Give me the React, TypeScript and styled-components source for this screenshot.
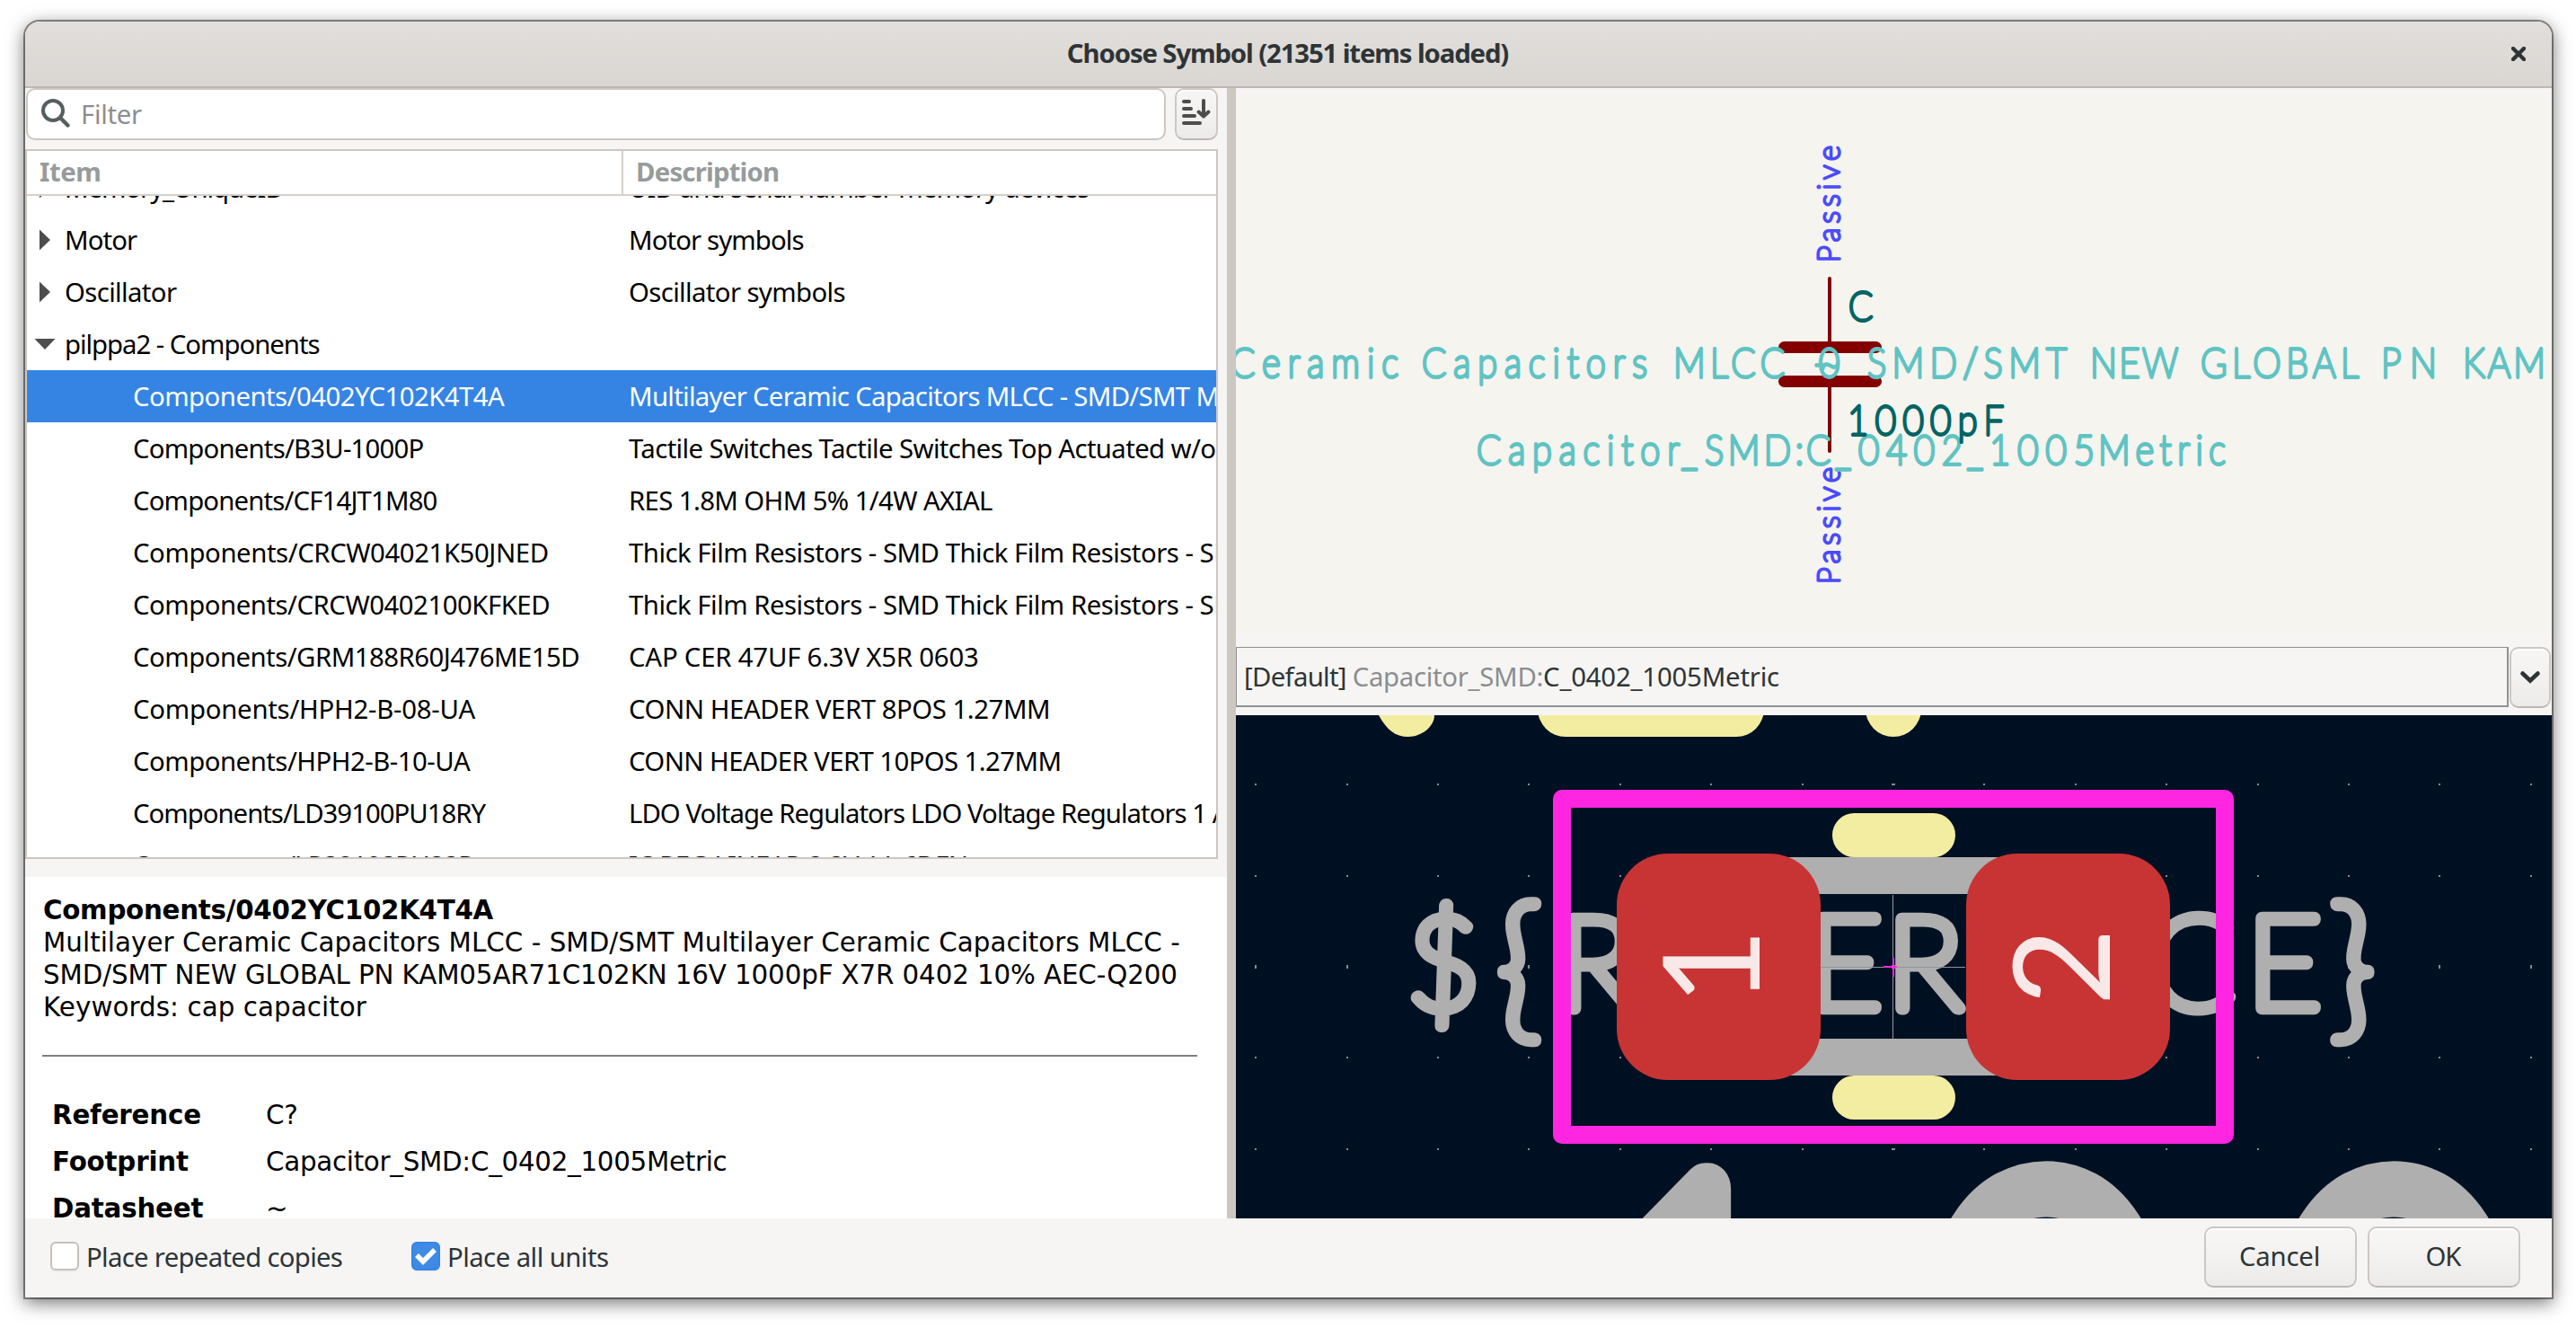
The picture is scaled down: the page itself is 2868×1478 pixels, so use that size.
import React from 'react';
import styled, { createGlobalStyle, css } from 'styled-components';

const ui = '"Noto Sans", "Open Sans", sans-serif';
const html = '"DejaVu Sans", sans-serif';

const GlobalStyle = createGlobalStyle`
  * { box-sizing: border-box; }
  body { margin: 0; background: #fff; font-family: ${ui}; font-size: 29.33px; color: #2e3436; }
`;

const Desktop = styled.div`
  width: 2868px;
  height: 1478px;
  padding: 24px 27px 34px 28px;
  overflow: hidden;
`;

const Window = styled.main`
  width: 2813px;
  height: 1420px;
  display: flex;
  flex-direction: column;
  background: #f6f5f4;
  border-radius: 16px 16px 0 0;
  box-shadow: 0 0 0 2px rgba(0, 0, 0, 0.42), 0 5px 20px 1px rgba(0, 0, 0, 0.55);
`;

const Label = styled.span<{ $ls?: number; $c?: string }>`
  white-space: pre;
  letter-spacing: ${p => p.$ls ?? -0.62}px;
  ${p => p.$c && css`color: ${p.$c};`}
`;

const TitleBar = styled.header`
  height: 74px;
  flex: none;
  display: grid;
  grid-template-columns: 60px 1fr 60px;
  align-items: center;
  padding-right: 7px;
  border-bottom: 2px solid #bfb8b1;
  border-radius: 16px 16px 0 0;
  background: linear-gradient(#e2dedb, #dad6d2);
`;

const Title = styled.h1`
  margin: 0;
  grid-column: 2;
  padding: 0 0 2px 5px;
  font-size: 29.33px;
  font-weight: 700;
  line-height: 40px;
  text-align: center;
`;

const CloseButton = styled.button`
  border: 0;
  background: none;
  padding: 0;
  height: 48px;
  display: flex;
  align-items: center;
  justify-content: center;
`;

const Body = styled.div`
  height: 1258px;
  display: flex;
`;

const LeftPane = styled.section`
  width: 1338px;
  flex: none;
  display: flex;
  flex-direction: column;
`;

const Sash = styled.div`
  width: 10px;
  flex: none;
  background: #cdc7c2;
`;

const RightPane = styled.section`
  width: 1465px;
  display: flex;
  flex-direction: column;
`;

const FilterRow = styled.div`
  height: 68px;
  display: flex;
  gap: 10px;
  padding: 0 10px 10px 1px;
`;

const FilterBox = styled.div`
  flex: 1;
  display: flex;
  align-items: center;
  gap: 11px;
  padding: 0 14px;
  border: 2px solid #cdc7c2;
  border-radius: 10px;
  background: #fff;
  color: #8b8e8f;
  svg { margin-top: -3px; }
`;

const buttonFace = css`
  border: 2px solid #cdc7c2;
  border-bottom-color: #bfb8b1;
  border-radius: 10px;
  background: linear-gradient(#f6f5f4 20%, #edebe9);
  box-shadow: inset 0 2px #fff;
  display: flex;
  align-items: center;
  justify-content: center;
  padding: 0;
`;

const SortButton = styled.button`
  ${buttonFace}
  width: 48px;
  height: 58px;
  svg { margin: -6px 0 0 -1px; }
`;

const Tree = styled.div`
  width: 1328px;
  height: 790px;
  display: flex;
  flex-direction: column;
  border: 2px solid #cdc7c2;
  background: #fff;
  color: #000;
`;

const TreeHeader = styled.div`
  height: 50px;
  flex: none;
  display: grid;
  grid-template-columns: 664px 1fr;
  border-bottom: 2px solid #d5d0cc;
  font-weight: 700;
  line-height: 46px;
  color: #979b9b;
`;

const HeaderCell = styled.div<{ $divided?: boolean }>`
  padding-left: 14px;
  ${p => p.$divided && css`border-right: 2px solid #d5d0cc;`}
`;

const TreeBody = styled.div`
  flex: 1;
  overflow: hidden;
`;

const TreeRow = styled.div<{ $selected?: boolean; $first?: boolean }>`
  height: 58px;
  margin-top: ${p => (p.$first ? -38 : 0)}px;
  display: grid;
  grid-template-columns: 670px 1fr;
  line-height: 58px;
  background: ${p => (p.$selected ? '#3584e4' : 'transparent')};
  color: ${p => (p.$selected ? '#fff' : '#000')};
`;

const ItemCell = styled.div<{ $child?: boolean }>`
  display: flex;
  align-items: center;
  padding-left: ${p => (p.$child ? 118 : 8)}px;
`;

const Expander = styled.span`
  width: 34px;
  height: 58px;
  display: flex;
  align-items: center;
`;

const TextCell = styled.div`
  overflow: hidden;
`;

const Details = styled.article`
  margin-top: 20px;
  height: 380px;
  overflow: hidden;
  padding: 19px 33px 0 19px;
  background: #fff;
  font-family: ${html};
  color: #000;
  line-height: 36px;
`;

const DetailText = styled.div<{ $bold?: boolean; $ls?: number }>`
  padding-left: 1px;
  white-space: pre;
  letter-spacing: ${p => p.$ls ?? 0}px;
  font-weight: ${p => (p.$bold ? 700 : 400)};
`;

const Rule = styled.hr`
  height: 2px;
  margin: 35px 0 0;
  border: 0;
  background: #808080;
`;

const FieldTable = styled.dl`
  margin: 39px 0 0;
  padding-left: 11px;
  display: grid;
  grid-template-columns: 238px 1fr;
  grid-auto-rows: 52px;
  line-height: 52px;
`;

const FieldName = styled.dt`
  font-weight: 700;
  letter-spacing: -0.2px;
`;

const FieldValue = styled.dd`
  margin: 0;
  letter-spacing: -0.28px;
`;

const SymbolCanvas = styled.svg`
  display: block;
  margin-top: 10px;
  flex: none;
  background: #f5f4ef;
`;

const FootprintCanvas = styled.svg`
  display: block;
  flex: none;
  background: #001023;
`;

const FootprintPicker = styled.div`
  height: 94px;
  flex: none;
  display: flex;
  gap: 1px;
  padding: 18px 1px 8px 0;
`;

const PickerText = styled.div`
  width: 1417px;
  height: 67px;
  display: flex;
  align-items: center;
  padding: 0 0 0 8px;
  border: solid #8e9192;
  border-width: 1px 2px 2px 1px;
`;

const PickerButton = styled.button`
  ${buttonFace}
  width: 46px;
  height: 68px;
`;

const Footer = styled.footer`
  flex: 1;
  display: flex;
  align-items: center;
  padding: 0 35px 2px 28px;
`;

const Check = styled.label<{ $width: number }>`
  width: ${p => p.$width}px;
  display: flex;
  align-items: center;
  gap: 8px;
`;

const CheckBox = styled.span<{ $on?: boolean }>`
  width: 32px;
  height: 32px;
  margin-top: -2px;
  display: flex;
  align-items: center;
  justify-content: center;
  border: 2px solid ${p => (p.$on ? '#3584e4' : '#c6c0ba')};
  border-radius: 6px;
  background: ${p => (p.$on ? '#3f8ae5' : '#fff')};
  box-shadow: 0 2px #efedeb;
`;

const Actions = styled.div`
  margin-left: auto;
  display: flex;
  gap: 12px;
`;

const ActionButton = styled.button`
  ${buttonFace}
  width: 170px;
  height: 68px;
  padding: 0 2px 2px 0;
  font: 29.33px ${ui};
  color: #2e3436;
`;

const StrokeText = styled.text<{ $size: number; $pen: number }>`
  font-family: Lato, sans-serif;
  font-weight: 100;
  font-size: ${p => p.$size}px;
  stroke-width: ${p => p.$pen}px;
  stroke-linejoin: round;
  stroke-linecap: round;
`;

const Brace = styled.tspan`
  font-size: 174px;
`;

const PadNumber = styled.text`
  font-family: Lato, sans-serif;
  font-size: 149px;
  fill: #f8e9e8;
  text-anchor: middle;
`;

type Item = { name: string; text: string; open?: boolean; child?: boolean; selected?: boolean; ls?: number; nls?: number };

const items: Item[] = [
  { name: 'Memory_UniqueID', text: 'UID and serial number memory devices', ls: -0.92, nls: -1.05 },
  { name: 'Motor', text: 'Motor symbols', ls: -0.9, nls: -0.9 },
  { name: 'Oscillator', text: 'Oscillator symbols' },
  { name: 'pilppa2 - Components', text: '', open: true, nls: -1.03 },
  { name: 'Components/0402YC102K4T4A', text: 'Multilayer Ceramic Capacitors MLCC - SMD/SMT Multilayer Ceramic', child: true, selected: true, ls: -0.7, nls: -0.53 },
  { name: 'Components/B3U-1000P', text: 'Tactile Switches Tactile Switches Top Actuated w/o Ground', child: true, nls: -0.8 },
  { name: 'Components/CF14JT1M80', text: 'RES 1.8M OHM 5% 1/4W AXIAL', child: true, nls: -0.85 },
  { name: 'Components/CRCW04021K50JNED', text: 'Thick Film Resistors - SMD Thick Film Resistors - SMD', child: true, ls: -0.5, nls: -0.42 },
  { name: 'Components/CRCW0402100KFKED', text: 'Thick Film Resistors - SMD Thick Film Resistors - SMD', child: true, ls: -0.5, nls: -0.48 },
  { name: 'Components/GRM188R60J476ME15D', text: 'CAP CER 47UF 6.3V X5R 0603', child: true, ls: -0.2, nls: -0.52 },
  { name: 'Components/HPH2-B-08-UA', text: 'CONN HEADER VERT 8POS 1.27MM', child: true, ls: -0.46, nls: -0.25 },
  { name: 'Components/HPH2-B-10-UA', text: 'CONN HEADER VERT 10POS 1.27MM', child: true, ls: -0.6, nls: -0.5 },
  { name: 'Components/LD39100PU18RY', text: 'LDO Voltage Regulators LDO Voltage Regulators 1 A', child: true, ls: -0.97, nls: -1 },
  { name: 'Components/LP38193PU33R', text: 'IC REG LINEAR 3.3V 1A 6DFN', child: true, nls: -0.7 },
];

const Word = ({ x, y, w, color, children }: { x: number; y: number; w: number; color: string; children: string }) => (
  <StrokeText $size={46} $pen={4} transform={`translate(${x} ${y}) scale(0.87 1)`} textLength={children.length > 1 ? w / 0.87 : undefined} fill={color} stroke={color}>
    {children}
  </StrokeText>
);

const field = '#5fc3c3';
const value = '#006464';
const line1: [string, number, number][] = [
  ['Ceramic', 1370, 187], ['Capacitors', 1583, 251], ['MLCC', 1863, 124], ['-', 2019, 20],
  ['SMD/SMT', 2079, 222], ['NEW', 2327, 98], ['GLOBAL', 2450, 176], ['PN', 2651, 62], ['KAM', 2742, 92],
];
const line2: [string, number, number][] = [
  ['Capacitor', 1644, 226], ['_', 1872, 28], ['SMD:', 1898, 110], ['C', 2011, 27], ['_', 2043, 27],
  ['0402', 2069, 116], ['_', 2190, 27], ['1005', 2215, 117], ['Metric', 2336, 142],
];

const SymbolPreview = () => (
  <SymbolCanvas width={1465} height={594} viewBox="1376 108 1465 594">
    <g stroke="#840000" strokeLinecap="round">
      <path d="M2037 310V380M2037 430V502" strokeWidth="4" />
      <path d="M1986.5 386.5H2088.5M1986.5 424.5H2088.5" strokeWidth="13" />
    </g>
    {[290, 648].map(y => (
      <StrokeText key={y} $size={34} $pen={3.2} transform={`translate(2048 ${y + 2}) rotate(-90) scale(0.97 1)`} textLength={134} fill="#4b4bff" stroke="#4b4bff">
        Passive
      </StrokeText>
    ))}
    {line1.map(([t, x, w]) => <Word key={x} x={x} y={420} w={w} color={field}>{t}</Word>)}
    <Word x={2025} y={420} w={24} color={field}>0</Word>
    <Word x={2026} y={420} w={20} color={field}>~</Word>
    {line2.map(([t, x, w]) => <Word key={x} x={x} y={517} w={w} color={field}>{t}</Word>)}
    <Word x={2058} y={357} w={28} color={value}>C</Word>
    <Word x={2057} y={484} w={174} color={value}>1000pF</Word>
  </SymbolCanvas>
);

const gridX = [1398, 1500, 1601, 1702, 1804, 1905, 2007, 2108, 2209, 2311, 2412, 2514, 2615, 2716, 2818];
const gridY = [873, 975, 1076, 1177, 1279];
const silk = '#f2eda1';
const fab = '#afafaf';

const FootprintPreview = () => (
  <FootprintCanvas width={1465} height={560} viewBox="1376 796 1465 560">
    <g fill="#868b90">
      {gridY.map(y => gridX.map(x => (
        <rect key={`${x}-${y}`} x={x - (x === 2108 ? 2 : 1)} y={y - (y === 1076 ? 2 : 1)} width={x === 2108 ? 4 : 2} height={y === 1076 ? 4 : 2} />
      )))}
    </g>
    <StrokeText $size={142} $pen={14.5} x="1566 1666 1735 1833 1923 2013 2101 2195 2285 2391 2502 2594" y="1122" fill={fab} stroke={fab}>
      $<Brace dy="15">{'{'}</Brace><tspan dy="-15">REFERENCE</tspan><Brace dy="15">{'}'}</Brace>
    </StrokeText>
    <StrokeText $size={533} $pen={57} transform="scale(0.88 1)" x="1989 2434 2874" y="1698" fill={fab} stroke={fab}>100</StrokeText>
    <path d="M1960 974.500H2240M1960 1176.500H2240" stroke={fab} strokeWidth="41" />
    <g stroke={silk} strokeLinecap="round">
      <path d="M2064.500 929.500H2152.500M2064.500 1221.500H2152.500" strokeWidth="49" />
      <path d="M1743 789H1933M2108 789V789.010" strokeWidth="62" />
    </g>
    <path d="M1535 796C1544 812 1553 820 1568 820C1582 820 1597 809 1597 796Z" fill={silk} />
    <rect x="1739" y="889" width="738" height="374" fill="none" stroke="#ff26e2" strokeWidth="20" strokeLinejoin="round" />
    <path d="M2107.500 996V1156M2027 1076.500H2188" stroke="#8f969e" />
    <path d="M2108 1066V1087M2097 1076H2112" stroke="#ff26e2" strokeWidth="2" />
    <g fill="#c83434">
      <rect x="1800" y="950" width="227" height="252" rx="57" />
      <rect x="2189" y="950" width="227" height="252" rx="57" />
    </g>
    <PadNumber transform="translate(1959 1076) rotate(-90)">1</PadNumber>
    <PadNumber transform="translate(2349 1076) rotate(-90)">2</PadNumber>
  </FootprintCanvas>
);

export default function App() {
  return (
    <Desktop>
      <GlobalStyle />
      <Window>
        <TitleBar>
          <Title><Label $ls={-1.13}>Choose Symbol (21351 items loaded)</Label></Title>
          <CloseButton aria-label="Close">
            <svg width="16" height="16" viewBox="0 0 16 16"><path d="M2 2L14 14M14 2L2 14" stroke="#2e3436" strokeWidth="4.400" strokeLinecap="square" /></svg>
          </CloseButton>
        </TitleBar>
        <Body>
          <LeftPane>
            <FilterRow>
              <FilterBox>
                <svg width="34" height="34" viewBox="0 0 34 34" fill="none" stroke="#555f5f" strokeLinecap="round">
                  <circle cx="14" cy="14" r="11" strokeWidth="4" /><path d="M22.500 22.500L30.500 30.500" strokeWidth="4.500" />
                </svg>
                <Label $ls={-0.3}>Filter</Label>
              </FilterBox>
              <SortButton aria-label="Sort">
                <svg width="34" height="30" viewBox="0 0 34 30" fill="none" stroke="#4d4d4d" strokeWidth="4" strokeLinecap="round" strokeLinejoin="round">
                  <path d="M3 4H9M3 12H11M3 20H15M3 28H21M25 3V19M19.500 15.500L25 20.500L30.500 15.500" />
                </svg>
              </SortButton>
            </FilterRow>
            <Tree>
              <TreeHeader>
                <HeaderCell $divided><Label $ls={-0.5}>Item</Label></HeaderCell>
                <HeaderCell><Label $ls={-0.8}>Description</Label></HeaderCell>
              </TreeHeader>
              <TreeBody>
                {items.map((it, i) => (
                  <TreeRow key={it.name} $first={i === 0} $selected={it.selected}>
                    <ItemCell $child={it.child}>
                      {!it.child && (
                        <Expander>
                          <svg width="24" height="24" viewBox="0 0 24 24" fill="#4d4d4d">
                            <path d={it.open ? 'M0.500 6H23.500L12 18Z' : 'M6 0.500V23.500L18 12Z'} />
                          </svg>
                        </Expander>
                      )}
                      <Label $ls={it.nls}>{it.name}</Label>
                    </ItemCell>
                    <TextCell><Label $ls={it.ls}>{it.text}</Label></TextCell>
                  </TreeRow>
                ))}
              </TreeBody>
            </Tree>
            <Details>
              <DetailText $bold $ls={-0.28}>Components/0402YC102K4T4A</DetailText>
              <DetailText $ls={0.03}>Multilayer Ceramic Capacitors MLCC - SMD/SMT Multilayer Ceramic Capacitors MLCC -</DetailText>
              <DetailText $ls={-0.12}>SMD/SMT NEW GLOBAL PN KAM05AR71C102KN 16V 1000pF X7R 0402 10% AEC-Q200</DetailText>
              <DetailText $ls={0.07}>Keywords: cap capacitor</DetailText>
              <Rule />
              <FieldTable>
                <FieldName>Reference</FieldName><FieldValue>C?</FieldValue>
                <FieldName>Footprint</FieldName><FieldValue>Capacitor_SMD:C_0402_1005Metric</FieldValue>
                <FieldName>Datasheet</FieldName><FieldValue>~</FieldValue>
              </FieldTable>
            </Details>
          </LeftPane>
          <Sash />
          <RightPane>
            <SymbolPreview />
            <FootprintPicker>
              <PickerText>
                <Label $ls={-0.7}>[Default] </Label>
                <Label $ls={-0.3} $c="#8b8e8f">Capacitor_SMD:</Label>
                <Label $ls={-0.2}>C_0402_1005Metric</Label>
              </PickerText>
              <PickerButton aria-label="Choose footprint">
                <svg width="24" height="16" viewBox="0 0 24 16"><path d="M3.500 3.500L12 11.500L20.500 3.500" fill="none" stroke="#2e3436" strokeWidth="4.600" strokeLinecap="round" /></svg>
              </PickerButton>
            </FootprintPicker>
            <FootprintPreview />
          </RightPane>
        </Body>
        <Footer>
          <Check $width={402}><CheckBox /><Label $ls={-0.7}>Place repeated copies</Label></Check>
          <Check $width={300}>
            <CheckBox $on>
              <svg width="26" height="20" viewBox="0 0 26 20"><path d="M3 9L10 16L23 3" fill="none" stroke="#fff" strokeWidth="5.500" /></svg>
            </CheckBox>
            <Label $ls={-0.55}>Place all units</Label>
          </Check>
          <Actions>
            <ActionButton><Label $ls={-0.2}>Cancel</Label></ActionButton>
            <ActionButton><Label $ls={-1}>OK</Label></ActionButton>
          </Actions>
        </Footer>
      </Window>
    </Desktop>
  );
}
